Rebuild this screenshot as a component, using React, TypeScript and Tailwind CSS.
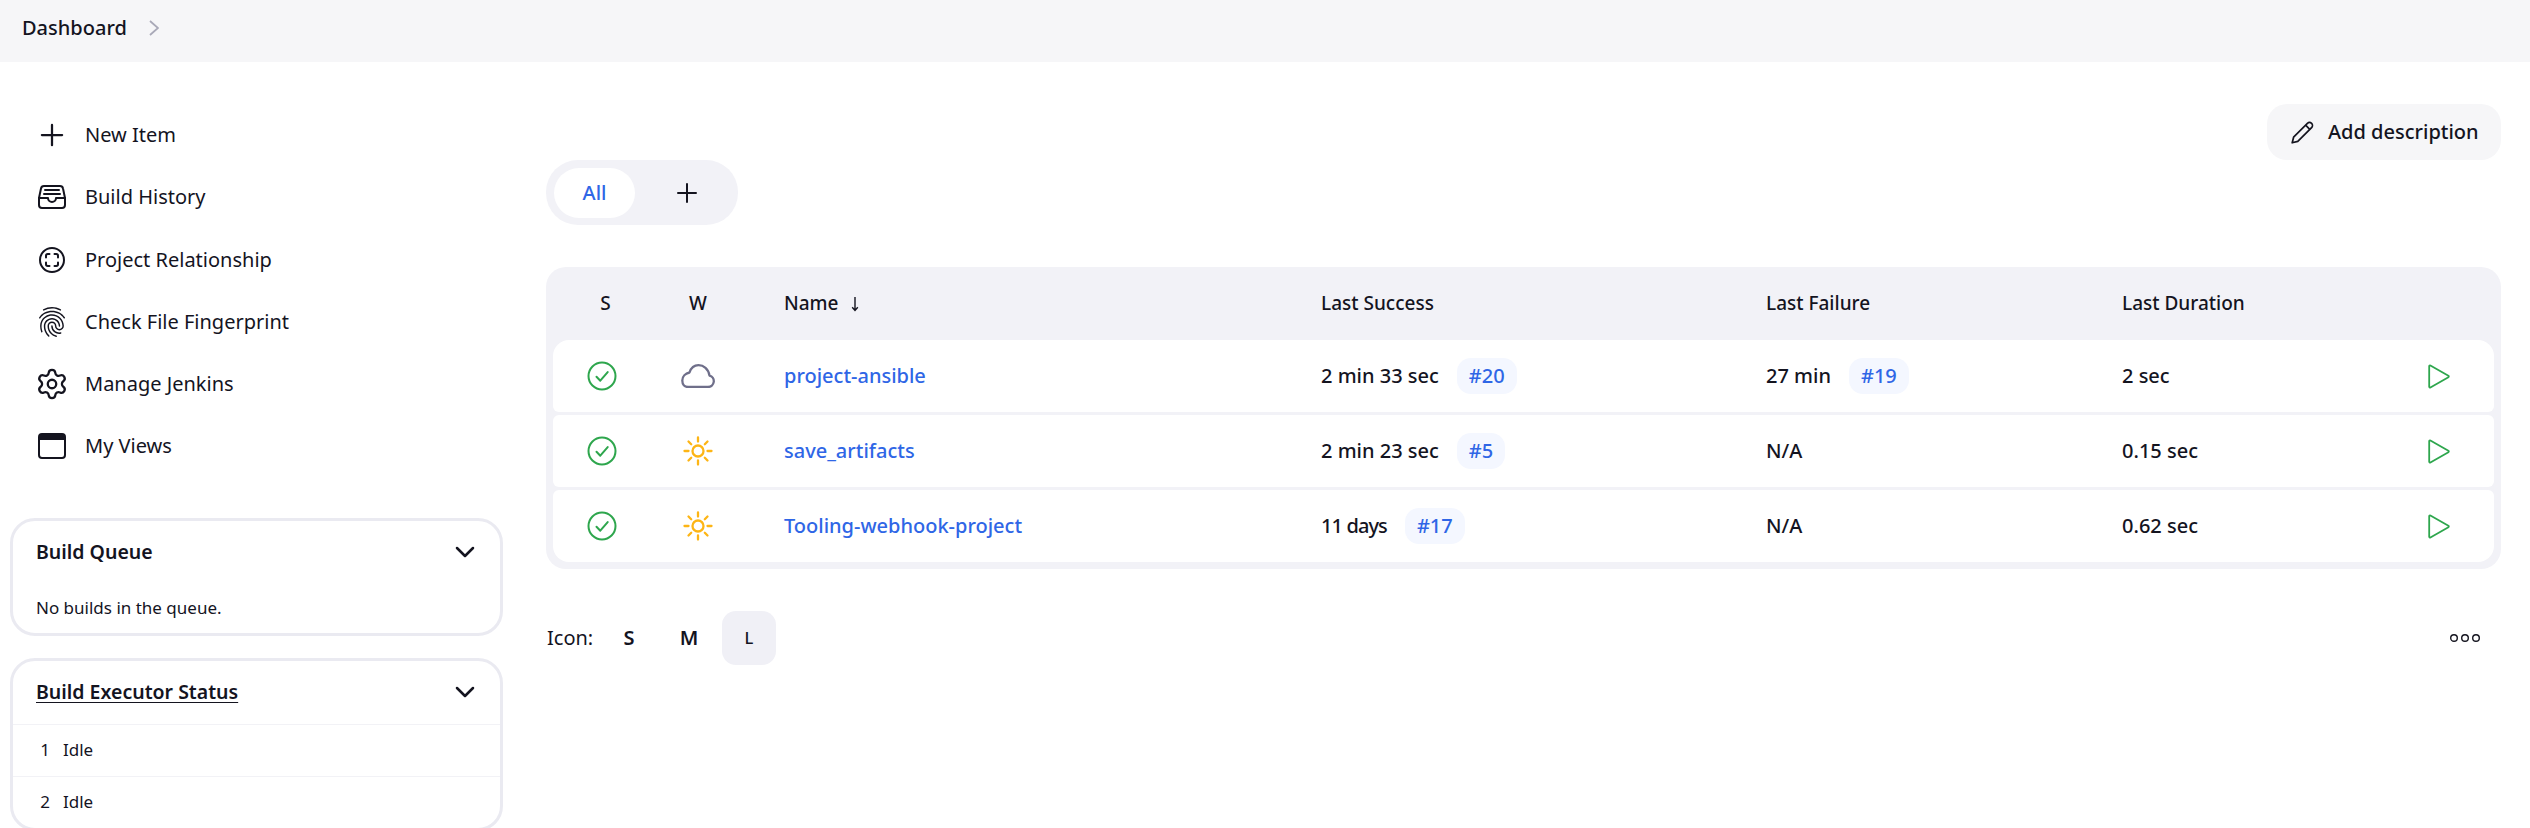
import { ChevronDown, Settings } from "lucide-react";
import {
  IoAddOutline,
  IoFileTrayFullOutline,
  IoFingerPrintOutline,
  IoScanCircleOutline,
} from "react-icons/io5";

const WindowIcon = () => (
  <svg viewBox="0 0 28 28" className="w-7 h-7 shrink-0" fill="none">
    <rect x="1" y="2" width="26" height="24" rx="3" stroke="#14141f" strokeWidth="2" />
    <path d="M1 8V5a3 3 0 0 1 3-3h20a3 3 0 0 1 3 3v3z" fill="#14141f" />
  </svg>
);

const CheckIcon = () => (
  <svg viewBox="0 0 30 30" className="w-[30px] h-[30px]" fill="none">
    <circle cx="15" cy="15" r="13.5" stroke="#2ea64d" strokeWidth="2" />
    <path d="M9.5 15.8l3.8 3.9 7.4-8.6" stroke="#2ea64d" strokeWidth="2" strokeLinecap="round" strokeLinejoin="round" />
  </svg>
);

const SunIcon = () => (
  <svg viewBox="0 0 30 30" className="w-[30px] h-[30px]" fill="none" stroke="#fdb515" strokeWidth="2.3" strokeLinecap="round">
    <circle cx="15" cy="15" r="5.5" />
    <path d="M15 1.5v4M15 24.5v4M1.5 15h4M24.5 15h4M5.5 5.5l2.7 2.7M21.8 21.8l2.7 2.7M5.5 24.5l2.7-2.7M21.8 8.2l2.7-2.7" />
  </svg>
);

const CloudIcon = () => (
  <svg viewBox="0 0 34 24" className="w-[34px] h-6" fill="none">
    <path
      d="M7 23H27a5.8 5.8 0 0 0 1.5-11.4C27.5 5 22.5 1.2 17.5 1.2 12.8 1.2 10 4 8.5 8.5 4.5 9.3 1.3 12.5 1.3 16.5 1.3 20.3 3.5 23 7 23z"
      stroke="#6f6f8a"
      strokeWidth="2.3"
      strokeLinejoin="round"
    />
  </svg>
);

const PlayIcon = () => (
  <svg viewBox="0 0 22 25" className="w-[22px] h-[25px]" fill="none">
    <path d="M1.2 2.2v20.6a.8.8 0 0 0 1.2.7l18-10.3a.8.8 0 0 0 0-1.4L2.4 1.5a.8.8 0 0 0-1.2.7z" stroke="#2ea64d" strokeWidth="1.8" strokeLinejoin="round" />
  </svg>
);

const PencilIcon = () => (
  <svg viewBox="0 0 23 23" className="w-[23px] h-[23px]" fill="none" stroke="#14141f" strokeWidth="1.7" strokeLinejoin="round">
    <path d="M1.2 21.8l1.4-5.6L16.4 2.4a2.9 2.9 0 0 1 4.2 4.2L6.8 20.4z" />
    <path d="M14.6 4.2l4.2 4.2" />
  </svg>
);

const SortArrow = () => (
  <svg viewBox="0 0 10 16" className="w-2.5 h-4" fill="none" stroke="#14141f" strokeWidth="1.4">
    <path d="M5 1v13M2.2 11.2L5 14.4l2.8-3.2" />
  </svg>
);

const sideItems = [
  { label: "New Item", icon: <IoAddOutline className="w-9 h-9 shrink-0" /> },
  { label: "Build History", icon: <IoFileTrayFullOutline className="w-8 h-8 shrink-0" /> },
  { label: "Project Relationship", icon: <IoScanCircleOutline className="w-8 h-8 shrink-0" /> },
  { label: "Check File Fingerprint", icon: <IoFingerPrintOutline className="w-8 h-8 shrink-0" /> },
  { label: "Manage Jenkins", icon: <Settings className="w-[34px] h-[34px] shrink-0" strokeWidth={1.6} /> },
  { label: "My Views", icon: <WindowIcon /> },
];

const jobs = [
  { name: "project-ansible", weather: "cloud", success: "2 min 33 sec", successBuild: "#20", failure: "27 min", failureBuild: "#19", duration: "2 sec" },
  { name: "save_artifacts", weather: "sun", success: "2 min 23 sec", successBuild: "#5", failure: "N/A", failureBuild: "", duration: "0.15 sec" },
  { name: "Tooling-webhook-project", weather: "sun", success: "11 days", successBuild: "#17", failure: "N/A", failureBuild: "", duration: "0.62 sec", tight: true },
];

const gridCols = "grid grid-cols-[97px_96px_575px_445px_356px_1fr] items-center";

const Badge = ({ children }: { children: string }) => (
  <span className="ml-[18px] h-9 px-3 rounded-[14px] bg-[#f4f7ff] text-[#2f66e6] font-medium flex items-center">
    {children}
  </span>
);

const Card = ({ title, underline, children }: { title: string; underline?: boolean; children: React.ReactNode }) => (
  <section className="border-[3px] border-[#eaeaf1] rounded-[25px]">
    <div className="h-[63px] pl-[23px] pr-[19px] flex items-center justify-between">
      <span className={`font-semibold text-[19.5px] ${underline ? "underline underline-offset-[3px]" : ""}`}>{title}</span>
      <ChevronDown className="w-8 h-8" strokeWidth={1.9} />
    </div>
    {children}
  </section>
);

export default function App() {
  return (
    <div className="h-[828px] overflow-hidden bg-white text-[#14141f] font-['Noto_Sans','Open_Sans',sans-serif] text-[20px] flex flex-col">
      <header className="h-[62px] shrink-0 bg-[#f6f6f8] pl-[22px] pb-[6px] flex items-center gap-[22px]">
        <span className="font-medium">Dashboard</span>
        <svg viewBox="0 0 10 16" className="w-2.5 h-4" fill="none">
          <path d="M1 1l8 7-8 7" stroke="#a9a9b8" strokeWidth="1.8" />
        </svg>
      </header>

      <div className="flex-1 flex min-h-0">
        <aside className="w-[493px] ml-2.5 shrink-0 flex flex-col">
          <nav className="pt-[42px] flex flex-col">
            {sideItems.map((item) => (
              <div key={item.label} className="h-[62.25px] pl-[26px] flex items-center">
                <span className="w-8 h-8 flex items-center justify-center mr-[17px]">{item.icon}</span>
                <span>{item.label}</span>
              </div>
            ))}
          </nav>
          <div className="mt-10 flex flex-col gap-[22px]">
            <Card title="Build Queue">
              <p className="pl-[23px] pt-[11px] pb-[12px] text-[17px] leading-[26px]">No builds in the queue.</p>
            </Card>
            <Card title="Build Executor Status" underline>
              <div className="border-t border-[#f2f2f6] h-[52px] flex items-center text-[17px]">
                <span className="w-[37px] text-right">1</span>
                <span className="ml-[13px]">Idle</span>
              </div>
              <div className="border-t border-[#f2f2f6] h-[52px] flex items-center text-[17px]">
                <span className="w-[37px] text-right">2</span>
                <span className="ml-[13px]">Idle</span>
              </div>
            </Card>
          </div>
        </aside>

        <main className="flex-1 pl-[43px] pr-[29px] min-w-0">
          <div className="relative pt-[98px]">
            <button className="absolute right-0 top-[42px] w-[234px] h-14 rounded-[20px] bg-[#f6f6f8] flex items-center pl-6 gap-[14px] font-medium">
              <PencilIcon />
              Add description
            </button>
            <div className="w-[192px] h-[65px] rounded-[32px] bg-[#f2f2f7] p-2 flex items-center">
              <span className="w-[81px] h-[50px] rounded-[25px] bg-white text-[#2f66e6] font-medium flex items-center justify-center">All</span>
              <span className="ml-9"><IoAddOutline className="w-8 h-8" /></span>
            </div>
          </div>

          <div className="mt-[42px] rounded-[20px] bg-[#f2f2f7] px-[7px] pb-[7px]">
            <div className={`${gridCols} h-[73px] font-medium text-[19px]`}>
              <span className="text-center pl-2">S</span>
              <span className="text-center">W</span>
              <span className="pl-[38px] flex items-center gap-[11px]">
                Name <SortArrow />
              </span>
              <span>Last Success</span>
              <span>Last Failure</span>
              <span>Last Duration</span>
            </div>
            <div className="flex flex-col gap-[3px]">
              {jobs.map((job, i) => (
                <div
                  key={job.name}
                  className={`${gridCols} h-[72px] bg-white font-medium rounded-[6px] ${i === 0 ? "rounded-t-[16px]" : ""} ${i === jobs.length - 1 ? "rounded-b-[16px]" : ""}`}
                >
                  <span className="flex justify-center"><CheckIcon /></span>
                  <span className="flex justify-center">
                    {job.weather === "cloud" ? <CloudIcon /> : <SunIcon />}
                  </span>
                  <span className="pl-[38px] text-[#2f66e6]">{job.name}</span>
                  <span className="flex items-center">
                    <span className={job.tight ? "tracking-[-0.9px]" : ""}>{job.success}</span>
                    <Badge>{job.successBuild}</Badge>
                  </span>
                  <span className="flex items-center">
                    {job.failure}
                    {job.failureBuild && <Badge>{job.failureBuild}</Badge>}
                  </span>
                  <span className="flex items-center justify-between pr-[44px]">
                    {job.duration}
                    <PlayIcon />
                  </span>
                </div>
              ))}
            </div>
          </div>

          <div className="mt-[42px] flex items-center justify-between">
            <div className="flex items-center">
              <span className="w-14 pl-px">Icon:</span>
              <span className="w-[54px] h-[54px] flex items-center justify-center font-semibold">S</span>
              <span className="w-[54px] h-[54px] ml-[6px] flex items-center justify-center font-semibold">M</span>
              <span className="w-[54px] h-[54px] ml-[6px] rounded-[14px] bg-[#f0f0f6] flex items-center justify-center font-medium text-[16.5px]">L</span>
            </div>
            <svg viewBox="0 0 30 10" className="w-[30px] h-2.5 mr-[21px]" fill="none" stroke="#14141f" strokeWidth="1.4">
              <circle cx="4" cy="5" r="3.3" />
              <circle cx="15" cy="5" r="3.3" />
              <circle cx="26" cy="5" r="3.3" />
            </svg>
          </div>
        </main>
      </div>
    </div>
  );
}
